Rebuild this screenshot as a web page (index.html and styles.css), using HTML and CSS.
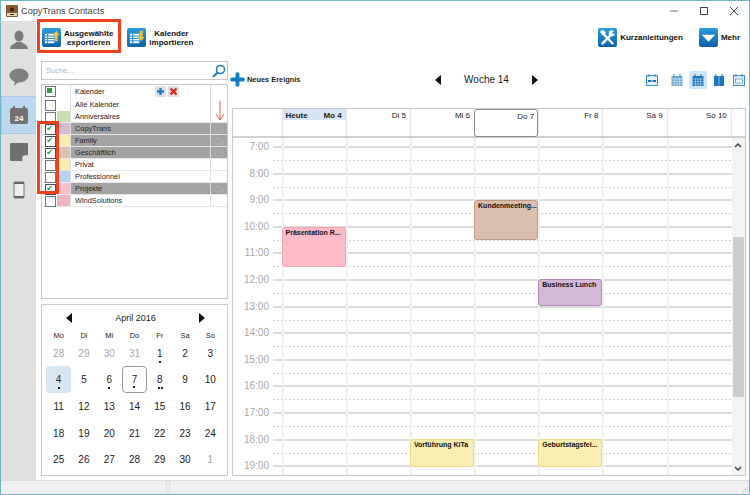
FILE: index.html
```html
<!DOCTYPE html>
<html lang="de">
<head>
  <meta charset="UTF-8" />
  <title>CopyTrans Contacts</title>
  <link rel="stylesheet" href="styles.css">
</head>
<body>
  <div class="window">
    <div class="titlebar">
      <svg class="app-icon" viewBox="0 0 12 12"><rect width="12" height="12" rx="1" fill="#8a5a35"/><path d="M1 8h10v3H1z" fill="#e8d6b8"/><circle cx="6" cy="4.500" r="2" fill="#3c2412"/><path d="M4 9h4v1H4z" fill="#3c2412"/></svg>
      <span class="title">CopyTrans Contacts</span>
      <div class="win-controls">
        <svg viewBox="0 0 10 10"><path d="M1 5h8" stroke="#777" stroke-width="1"/></svg>
        <svg viewBox="0 0 10 10"><rect x="1.500" y="1.500" width="7" height="7" fill="none" stroke="#444"/></svg>
        <svg viewBox="0 0 10 10"><path d="M1 1l8 8M9 1l-8 8" stroke="#444"/></svg>
      </div>
    </div>

    <div class="main">
      <div class="sidebar">
        <div class="side-item">
          <svg viewBox="0 0 20 20"><ellipse cx="10" cy="6" rx="4.500" ry="5.500" fill="#7c7c7c"/><path d="M1 19c0-4 4-5 6.500-7h5c2.500 2 6.500 3 6.500 7z" fill="#7c7c7c"/></svg>
        </div>
        <div class="side-item">
          <svg viewBox="0 0 20 20"><ellipse cx="10" cy="8.500" rx="9.500" ry="7" fill="#808080"/><path d="M6 14l-1 5 6-5z" fill="#808080"/></svg>
        </div>
        <div class="side-item active">
          <svg viewBox="0 0 20 20"><rect x="1" y="3" width="18" height="16" rx="2" fill="#727272"/><rect x="4" y="1" width="2" height="4" fill="#727272"/><rect x="14" y="1" width="2" height="4" fill="#727272"/><text x="10" y="16" text-anchor="middle" class="cal-num">24</text></svg>
        </div>
        <div class="side-item">
          <svg viewBox="0 0 20 20"><path d="M2 1h16a1 1 0 0 1 1 1v11l-6 6H2a1 1 0 0 1-1-1V2a1 1 0 0 1 1-1z" fill="#707070"/><path d="M13 19l1-5 5-1z" fill="#f2f2f2"/></svg>
        </div>
        <div class="side-item">
          <svg viewBox="0 0 20 20"><rect x="5" y="2" width="10" height="16" rx="1" fill="#eee" stroke="#777"/><path d="M5 3h10M5 17h10" stroke="#666" stroke-width="2"/></svg>
        </div>
      </div>

      <div class="content">
        <div class="toolbar">
          <div class="tool">
            <svg class="tool-icon" viewBox="0 0 20 20"><defs><linearGradient id="tile" x1="0" y1="0" x2="0" y2="1"><stop offset="0" stop-color="#2b9be0"/><stop offset="1" stop-color="#0a62a8"/></linearGradient></defs><rect width="20" height="20" rx="2" fill="url(#tile)"/><path d="M3 6h10v10H3z" fill="#fff"/><path d="M3 8.500h10M3 11h10M3 13.500h10M6 6v10" stroke="#1b7fc4"/><path d="M15 3l3.500 4.500H16.500V14h-3V7.500H11.500z" fill="#f5c02c"/></svg>
            <span>Ausgewählte<br>exportieren</span>
          </div>
          <div class="tool">
            <svg class="tool-icon" viewBox="0 0 20 20"><rect width="20" height="20" rx="2" fill="url(#tile)"/><path d="M3 6h10v10H3z" fill="#fff"/><path d="M3 8.500h10M3 11h10M3 13.500h10M6 6v10" stroke="#1b7fc4"/><path d="M15 14l3.500-4.500H16.500V3h-3v6.500H11.500z" fill="#f5c02c"/></svg>
            <span>Kalender<br>importieren</span>
          </div>
          <div class="tool tool-right">
            <svg class="tool-icon" viewBox="0 0 20 20"><rect width="20" height="20" rx="2" fill="url(#tile)"/><path d="M4 17L15 6M4.500 5L16 17" stroke="#fff" stroke-width="2.600"/><circle cx="14.500" cy="5.500" r="3.200" fill="#fff"/><path d="M14.500 5.500L18 2v4z" fill="#1b86cf"/><path d="M2.500 3l3-1 3 3-3 3-3-3z" fill="#fff"/></svg>
            <span>Kurzanleitungen</span>
          </div>
          <div class="tool tool-more">
            <svg class="tool-icon" viewBox="0 0 20 20"><rect width="20" height="20" rx="2" fill="url(#tile)"/><path d="M3 7h14l-7 7.500z" fill="#fff"/></svg>
            <span>Mehr</span>
          </div>
        </div>

        <div class="columns">
          <div class="left">
            <div class="search">
              <span>Suche...</span>
              <svg viewBox="0 0 14 14"><circle cx="8.500" cy="5.500" r="4" fill="none" stroke="#1b7fc4" stroke-width="1.600"/><path d="M5.500 8.500L1 13" stroke="#1b7fc4" stroke-width="2.200"/></svg>
            </div>

            <div class="list">
              <div class="row head">
                <span class="box"><i class="some"></i></span><span class="swatch"></span><span class="name">Kalender</span>
                <span class="mini-btns">
                  <svg viewBox="0 0 11 11"><rect width="11" height="11" fill="#e2e2e2"/><path d="M5.500 2v7M2 5.500h7" stroke="#1b7fc4" stroke-width="2.400"/></svg>
                  <svg viewBox="0 0 11 11"><rect width="11" height="11" fill="#e2e2e2"/><path d="M2.500 2.500l6 6M8.500 2.500l-6 6" stroke="#dc2a1c" stroke-width="2.400"/></svg>
                </span>
                <span class="cloud-cell"></span>
              </div>
              <div class="row head"><span class="box"></span><span class="swatch"></span><span class="name">Alle Kalender</span><span class="cloud-cell"></span></div>
              <div class="row"><span class="box"></span><span class="swatch c-green"></span><span class="name">Anniversaires</span><span class="cloud-cell"></span></div>
              <div class="row on"><span class="box checked">✔</span><span class="swatch c-purple"></span><span class="name">CopyTrans</span><span class="cloud-cell"><svg viewBox="0 0 14 8"><path d="M3 7.500a2.500 2.500 0 0 1 0-4 4 3.500 0 0 1 7.500-.5 2.500 2.500 0 0 1 .5 4.500z" fill="none" stroke="#b4b4b4"/></svg></span></div>
              <div class="row on"><span class="box checked">✔</span><span class="swatch c-yellow"></span><span class="name">Family</span><span class="cloud-cell"><svg viewBox="0 0 14 8"><path d="M3 7.500a2.500 2.500 0 0 1 0-4 4 3.500 0 0 1 7.500-.5 2.500 2.500 0 0 1 .5 4.500z" fill="none" stroke="#b4b4b4"/></svg></span></div>
              <div class="row on"><span class="box checked">✔</span><span class="swatch c-brown"></span><span class="name">Geschäftlich</span><span class="cloud-cell"><svg viewBox="0 0 14 8"><path d="M3 7.500a2.500 2.500 0 0 1 0-4 4 3.500 0 0 1 7.500-.5 2.500 2.500 0 0 1 .5 4.500z" fill="none" stroke="#b4b4b4"/></svg></span></div>
              <div class="row"><span class="box"></span><span class="swatch c-yellow"></span><span class="name">Privat</span><span class="cloud-cell"></span></div>
              <div class="row"><span class="box"></span><span class="swatch c-blue"></span><span class="name">Professionnel</span><span class="cloud-cell"></span></div>
              <div class="row on"><span class="box checked">✔</span><span class="swatch c-pink"></span><span class="name">Projekte</span><span class="cloud-cell"><svg viewBox="0 0 14 8"><path d="M3 7.500a2.500 2.500 0 0 1 0-4 4 3.500 0 0 1 7.500-.5 2.500 2.500 0 0 1 .5 4.500z" fill="none" stroke="#b4b4b4"/></svg></span></div>
              <div class="row"><span class="box"></span><span class="swatch c-rose"></span><span class="name">WindSolutions</span><span class="cloud-cell"></span></div>
            </div>

            <div class="month">
              <div class="month-head"><span class="arrow-left"></span><span>April 2016</span><span class="arrow-right"></span></div>
              <div class="month-grid">
                <span class="wd">Mo</span><span class="wd">Di</span><span class="wd">Mi</span><span class="wd">Do</span><span class="wd">Fr</span><span class="wd">Sa</span><span class="wd">So</span>
                <span class="d out">28</span><span class="d out">29</span><span class="d out">30</span><span class="d out">31</span><span class="d dot">1</span><span class="d">2</span><span class="d">3</span>
                <span class="d dot sel">4</span><span class="d">5</span><span class="d dot">6</span><span class="d dot now">7</span><span class="d dot2">8</span><span class="d">9</span><span class="d">10</span>
                <span class="d">11</span><span class="d">12</span><span class="d">13</span><span class="d">14</span><span class="d">15</span><span class="d">16</span><span class="d">17</span>
                <span class="d">18</span><span class="d">19</span><span class="d">20</span><span class="d">21</span><span class="d">22</span><span class="d">23</span><span class="d">24</span>
                <span class="d">25</span><span class="d">26</span><span class="d">27</span><span class="d">28</span><span class="d">29</span><span class="d">30</span><span class="d out">1</span>
              </div>
            </div>
          </div>

          <div class="right">
            <div class="week-bar">
              <div class="new-event">
                <svg viewBox="0 0 14 14"><path d="M7 2v10M2 7h10" stroke="#0f7cc4" stroke-width="3.600" stroke-linecap="round"/></svg>
                <span>Neues Ereignis</span>
              </div>
              <div class="week-nav"><span class="arrow-left"></span><span class="week-label">Woche 14</span><span class="arrow-right"></span></div>
              <div class="views">
                <svg class="view-first" viewBox="0 0 14 14"><rect x="1.500" y="2.500" width="11" height="10" fill="#e4f0fa" stroke="#3d8fcb"/><path d="M4 1v3M10 1v3" stroke="#3d8fcb"/><path d="M3 8h3.500M7.500 8H11" stroke="#1b6fb0" stroke-width="2"/></svg>
                <svg viewBox="0 0 14 14"><rect x="1.500" y="3" width="11" height="10" fill="#6fa9d6"/><path d="M4 1v3M10 1v3" stroke="#2f7fbd"/><path d="M1.500 6h11M1.500 8.500h11M1.500 11h11M4.500 5v8M7 5v8M9.500 5v8" stroke="#dcecf8" stroke-width=".5"/></svg>
                <span class="view-on"><svg viewBox="0 0 14 14"><rect x="1.500" y="3" width="11" height="10" fill="#1b77bd"/><path d="M4 1v3M10 1v3" stroke="#1b77bd"/><path d="M1.500 6h11M1.500 8.500h11M1.500 11h11M4.500 5v8M7 5v8M9.500 5v8" stroke="#cfe6f8" stroke-width=".5"/></svg></span>
                <svg viewBox="0 0 14 14"><rect x="2" y="3" width="10" height="10" fill="#1b77bd"/><path d="M4 1v3M10 1v3" stroke="#1b77bd"/><path d="M7 3v10" stroke="#cfe6f8" stroke-width=".6"/></svg>
                <svg class="view-last" viewBox="0 0 14 14"><rect x="1.500" y="2.500" width="11" height="10" fill="#e4f0fa" stroke="#3d8fcb"/><path d="M4 1v3M10 1v3" stroke="#3d8fcb"/><rect x="3.500" y="6" width="7" height="4" fill="#fff" stroke="#3d8fcb" stroke-width=".7"/></svg>
              </div>
            </div>

            <div class="week">
              <div class="week-head">
                <div class="gutter"></div>
                <div class="dh today"><span>Heute</span><span>Mo 4</span></div>
                <div class="dh"><span></span><span>Di 5</span></div>
                <div class="dh"><span></span><span>Mi 6</span></div>
                <div class="dh current"><span></span><span>Do 7</span></div>
                <div class="dh"><span></span><span>Fr 8</span></div>
                <div class="dh"><span></span><span>Sa 9</span></div>
                <div class="dh"><span></span><span>So 10</span></div>
                <div class="head-end"></div>
              </div>
              <div class="week-body">
                <div class="hours">
                  <div class="hour"><span>7:00</span><div class="slot"></div></div>
                  <div class="hour"><span>8:00</span><div class="slot"></div></div>
                  <div class="hour"><span>9:00</span><div class="slot"></div></div>
                  <div class="hour"><span>10:00</span><div class="slot"></div></div>
                  <div class="hour"><span>11:00</span><div class="slot"></div></div>
                  <div class="hour"><span>12:00</span><div class="slot"></div></div>
                  <div class="hour"><span>13:00</span><div class="slot"></div></div>
                  <div class="hour"><span>14:00</span><div class="slot"></div></div>
                  <div class="hour"><span>15:00</span><div class="slot"></div></div>
                  <div class="hour"><span>16:00</span><div class="slot"></div></div>
                  <div class="hour"><span>17:00</span><div class="slot"></div></div>
                  <div class="hour"><span>18:00</span><div class="slot"></div></div>
                  <div class="hour"><span>19:00</span><div class="slot"></div></div>
                  <div class="days">
                    <div class="col"><div class="event ev-pink">Präsentation R...</div></div>
                    <div class="col"></div>
                    <div class="col"><div class="event ev-yellow">Vorführung KiTa</div></div>
                    <div class="col"><div class="event ev-brown">Kundenmeeting...</div></div>
                    <div class="col"><div class="event ev-purple">Business Lunch</div><div class="event ev-yellow">Geburtstagsfei...</div></div>
                    <div class="col"></div>
                    <div class="col"></div>
                  </div>
                </div>
                <div class="scrollbar">
                  <svg class="sb-btn" viewBox="0 0 12 14"><path d="M3 9l3-3 3 3" fill="none" stroke="#444" stroke-width="1.500"/></svg>
                  <div class="sb-track"><div class="sb-thumb"></div></div>
                  <svg class="sb-btn" viewBox="0 0 12 14"><path d="M3 6l3 3 3-3" fill="none" stroke="#444" stroke-width="1.500"/></svg>
                </div>
              </div>
            </div>
          </div>
        </div>
      </div>
    </div>

    <div class="statusbar">
      <div class="status-cell"></div>
      <div class="status-cell"></div>
      <svg class="grip" viewBox="0 0 8 8"><path d="M6 1h1v1H6zM4 3h1v1H4zM6 3h1v1H6zM2 5h1v1H2zM4 5h1v1H4zM6 5h1v1H6z" fill="#bbb"/></svg>
    </div>

    <!-- red marks drawn on top of the screenshot -->
    <div class="mark mark-export"></div>
    <div class="mark mark-checks"></div>
    <svg class="mark-arrow" viewBox="0 0 10 20"><path d="M5 0v19M1 13l4 6 4-6" fill="none" stroke="#ee5a3a"/></svg>
  </div>
</body>
</html>
```

FILE: styles.css
```css
* {
  box-sizing: border-box;
}
html, body {
  margin: 0;
  height: 100%;
}
body {
  font-family: "Liberation Sans", Arial, sans-serif;
  font-size: 9px;
  color: #222;
  background: #fff;
}
.window {
  position: relative;
  width: 750px;
  height: 495px;
  border: 1px solid #6fb7c7;
  display: flex;
  flex-direction: column;
  overflow: hidden;
}
.titlebar {
  height: 20px;
  display: flex;
  align-items: center;
  padding-left: 5px;
  flex: none;
}
.app-icon {
  width: 12px;
  height: 12px;
}
.title {
  margin-left: 3px;
  font-size: 9.2px;
  color: #444;
}
.win-controls {
  margin-left: auto;
  display: flex;
  gap: 20px;
  padding-right: 10px;
}
.win-controls svg {
  width: 10px;
  height: 10px;
}
.main {
  flex: 1;
  display: flex;
  min-height: 0;
}

/* sidebar */
.sidebar {
  width: 35px;
  background: #e0e0e0;
  flex: none;
  display: flex;
  flex-direction: column;
}
.side-item {
  height: 37.5px;
  display: flex;
  align-items: center;
  justify-content: center;
}
.side-item svg {
  width: 20px;
  height: 20px;
}
.side-item.active {
  background: #bdd7ee;
  border: 1px solid #a9cbe6;
  border-right: none;
}
.cal-num {
  font-size: 8px;
  font-weight: bold;
  fill: #fff;
}

/* toolbar */
.content {
  flex: 1;
  display: flex;
  flex-direction: column;
  min-width: 0;
}
.toolbar {
  height: 38px;
  display: flex;
  align-items: center;
  padding: 0 0 5px 6px;
  flex: none;
}
.tool {
  display: flex;
  align-items: center;
  gap: 3px;
  font-weight: bold;
  font-size: 8px;
  line-height: 9px;
  text-align: center;
  color: #111;
  margin-right: 14px;
}
.tool-icon {
  width: 19px;
  height: 19px;
  flex: none;
}
.tool-right {
  margin-left: auto;
  margin-right: 16px;
}
.tool-more {
  margin-right: 9px;
}
.columns {
  flex: 1;
  display: flex;
  min-height: 0;
  padding: 0 3px 4px 5px;
  gap: 4px;
}

/* left column */
.left {
  width: 187px;
  flex: none;
  display: flex;
  flex-direction: column;
}
.search {
  height: 19px;
  margin-top: 2px;
  border: 1px solid #c8c8c8;
  display: flex;
  align-items: center;
  justify-content: space-between;
  padding: 0 1px 0 4px;
  color: #b4b4b4;
  font-size: 7.5px;
}
.search svg {
  width: 14px;
  height: 14px;
}
.list {
  height: 215px;
  margin-top: 4px;
  border: 1px solid #c8c8c8;
}
.row {
  height: 12px;
  display: flex;
  align-items: stretch;
  font-size: 7.4px;
  line-height: 11px;
  border-bottom: 1px solid #e8e8e8;
}
.row.head {
  border-bottom: none;
}
.row.head:first-child {
  height: 14px;
  line-height: 14px;
}
.row.on .name,
.row.on .cloud-cell {
  background: #a3a3a3;
}
.box {
  width: 15px;
  height: 11px;
  display: flex;
  align-items: center;
  justify-content: center;
  flex: none;
  font-family: "DejaVu Sans", sans-serif;
  font-size: 8px;
  color: #12a02a;
  position: relative;
  z-index: 0;
}
.box::before {
  content: "";
  position: absolute;
  z-index: -1;
  left: 3px;
  top: 1px;
  width: 9px;
  height: 9px;
  border: 1px solid #6a7684;
  background: #fff;
}
.box.checked::before {
  border-color: #3f5068;
}
.box .some {
  width: 5px;
  height: 5px;
  background: #2f9e3a;
}
.swatch {
  width: 14px;
  flex: none;
  border-right: 1px solid #ddd;
}
.name {
  flex: 1;
  padding-left: 4px;
  border-right: 1px solid #ddd;
}
.row.head:first-child .name {
  flex: none;
  width: 84px;
  border-right: none;
}
.mini-btns {
  flex: 1;
  display: flex;
  gap: 2px;
  padding-top: 1px;
  border-right: 1px solid #ddd;
}
.mini-btns svg {
  width: 11px;
  height: 11px;
}
.cloud-cell {
  width: 16px;
  flex: none;
  display: flex;
  align-items: center;
  justify-content: center;
}
.cloud-cell svg {
  width: 12px;
  height: 8px;
}
.c-green { background: #c9dfb0; }
.c-purple { background: #d5bcd7; }
.c-yellow { background: #f8edae; }
.c-brown { background: #dcc1b0; }
.c-blue { background: #b5d2ee; }
.c-pink { background: #fdbcca; }
.c-rose { background: #efb4bf; }

/* month */
.month {
  flex: 1;
  margin-top: 5px;
  border: 1px solid #c8c8c8;
  padding: 0 4px;
}
.month-head {
  height: 25px;
  display: flex;
  align-items: center;
  justify-content: space-between;
  padding: 0 18px 0 20px;
  font-size: 9px;
}
.arrow-left {
  width: 0;
  height: 0;
  border: 5px solid transparent;
  border-left: none;
  border-right: 6px solid #111;
}
.arrow-right {
  width: 0;
  height: 0;
  border: 5px solid transparent;
  border-right: none;
  border-left: 6px solid #111;
}
.month-grid {
  display: grid;
  grid-template-columns: repeat(7, 1fr);
  grid-template-rows: 10px repeat(5, 26.6px);
  justify-items: center;
  align-items: center;
}
.wd {
  font-size: 7.5px;
}
.d {
  position: relative;
  width: 25px;
  height: 27px;
  display: flex;
  align-items: center;
  justify-content: center;
  font-size: 10px;
  border-radius: 4px;
}
.out {
  color: #a8a8a8;
}
.sel {
  background: #d8e6f3;
}
.now {
  border: 1px solid #999;
}
.dot::after,
.dot2::after {
  content: "";
  position: absolute;
  left: 50%;
  bottom: 4px;
  width: 2px;
  height: 2px;
  margin-left: -1px;
  background: #222;
}
.dot2::after {
  margin-left: -2px;
  box-shadow: 3px 0 0 #222;
}

/* right column */
.right {
  flex: 1;
  min-width: 0;
  display: flex;
  flex-direction: column;
}
.week-bar {
  height: 49px;
  display: flex;
  align-items: center;
  padding-bottom: 8px;
  flex: none;
}
.new-event {
  display: flex;
  align-items: center;
  gap: 2px;
  font-weight: bold;
  font-size: 7.4px;
  margin-left: -2px;
  width: 205px;
}
.new-event svg {
  width: 15px;
  height: 15px;
}
.week-nav {
  display: flex;
  align-items: center;
  justify-content: space-between;
  width: 103px;
  font-size: 10px;
}
.views {
  margin-left: auto;
  display: flex;
  align-items: center;
  gap: 5px;
}
.views svg {
  width: 14px;
  height: 14px;
  display: block;
}
.views .view-first {
  margin-right: 6px;
}
.views .view-last {
  margin-left: 1px;
}
.view-on {
  background: #cfe6f8;
  border-radius: 2px;
  padding: 2px;
}

/* week grid */
.week {
  flex: 1;
  min-height: 0;
  border: 1px solid #c8c8c8;
  display: flex;
  flex-direction: column;
}
.week-head {
  height: 29px;
  flex: none;
  display: flex;
  border-bottom: 2px solid #d0d0d0;
}
.gutter {
  width: 48.5px;
  flex: none;
}
.dh {
  width: 64.2px;
  flex: none;
  display: flex;
  justify-content: space-between;
  align-items: flex-start;
  border-left: 1px solid #e8e8e8;
  padding: 1px 4px 0 3px;
  font-size: 8px;
  line-height: 11px;
}
.dh.today {
  font-weight: bold;
  background: linear-gradient(#d6e5f3 11px, transparent 11px);
}
.dh.current {
  border: 1px solid #8a8a8a;
  border-radius: 3px;
  height: 28px;
  padding-right: 3px;
}
.head-end {
  flex: 1;
  border-left: 1px solid #e8e8e8;
}
.week-body {
  flex: 1;
  min-height: 0;
  display: flex;
}
.hours {
  position: relative;
  flex: 1;
  overflow: hidden;
  padding-top: 8px;
}
.hour {
  height: 26.6px;
  display: flex;
}
.hour span {
  width: 36px;
  flex: none;
  margin-top: -5px;
  height: 12px;
  text-align: right;
  font-size: 10px;
  line-height: 12px;
  color: #a8a8a8;
}
.slot {
  flex: 1;
  margin-left: 4px;
  border-top: 2px solid #dcdcdc;
  position: relative;
}
.slot::after {
  content: "";
  position: absolute;
  left: 0;
  right: 0;
  top: 12px;
  height: 1px;
  background: repeating-linear-gradient(90deg, #cfcfcf 0 2px, transparent 2px 4px);
}
.days {
  position: absolute;
  left: 48.5px;
  top: 0;
  bottom: 0;
  display: flex;
}
.col {
  position: relative;
  width: 64.2px;
  border-left: 2px solid #f0f0f0;
}
.event {
  position: absolute;
  left: -2px;
  right: 0;
  border-radius: 3px;
  border: 1px solid;
  padding: 0 3px;
  font-size: 7px;
  font-weight: bold;
  line-height: 10px;
  white-space: nowrap;
  color: #111;
}
.ev-pink {
  top: 89px;
  height: 40px;
  background: #ffbac8;
  border-color: #f5a5b5;
}
.ev-brown {
  top: 62px;
  height: 40px;
  background: #dbbfae;
  border-color: #c09a82;
}
.ev-purple {
  top: 141px;
  height: 27px;
  background: #d4b9d6;
  border-color: #b48ab7;
}
.ev-yellow {
  top: 301px;
  height: 28px;
  background: #f7eeb0;
  border-color: #ecd98a;
}
.scrollbar {
  width: 13px;
  flex: none;
  background: #f3f3f3;
  display: flex;
  flex-direction: column;
}
.sb-btn {
  width: 12px;
  height: 14px;
  flex: none;
}
.sb-track {
  flex: 1;
  padding: 85px 1px 0;
}
.sb-thumb {
  height: 160px;
  background: #cdcdcd;
}

/* status bar */
.statusbar {
  height: 14px;
  flex: none;
  background: #f0f0f0;
  border-top: 1px solid #ddd;
  display: flex;
  align-items: flex-end;
}
.status-cell {
  width: 166px;
  height: 100%;
  border-right: 1px solid #ddd;
}
.status-cell + .status-cell {
  flex: 1;
  border-right: none;
  border-left: 1px solid #ddd;
  margin-left: 2px;
}
.grip {
  width: 8px;
  height: 8px;
  flex: none;
}

/* red annotations */
.mark {
  position: absolute;
  border: 3px solid #f0401c;
}
.mark-export {
  left: 36px;
  top: 18px;
  width: 84px;
  height: 34px;
}
.mark-checks {
  left: 36px;
  top: 120px;
  width: 22px;
  height: 73px;
}
.mark-arrow {
  position: absolute;
  left: 214px;
  top: 100px;
  width: 10px;
  height: 20px;
}
```
